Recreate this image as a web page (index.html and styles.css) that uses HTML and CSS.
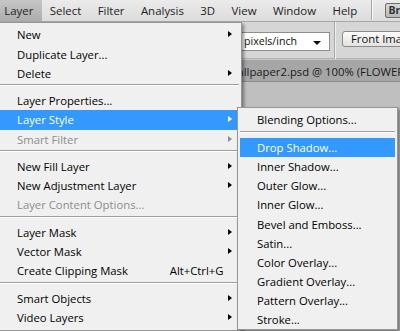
FILE: index.html
```html
<!DOCTYPE html>
<html>
<head>
<meta charset="utf-8">
<link rel="stylesheet" href="styles.css">
</head>
<body>
<div class="app">
  <div class="menubar">
    <span class="mb-item active">Layer</span>
    <span class="mb-item">Select</span>
    <span class="mb-item">Filter</span>
    <span class="mb-item">Analysis</span>
    <span class="mb-item">3D</span>
    <span class="mb-item">View</span>
    <span class="mb-item">Window</span>
    <span class="mb-item">Help</span>
    <span class="mb-sep"></span>
    <span class="br-btn">Br</span>
  </div>
  <div class="optionsbar">
    <div class="select"><span>pixels/inch</span><i class="down"></i></div>
    <span class="ob-sep"></span>
    <span class="btn">Front Image</span>
  </div>
  <div class="tabrow">
    <span class="doctab">Wallpaper2.psd @ 100% (FLOWERS, RGB/8)</span>
  </div>
  <div class="workspace"></div>

  <div class="menu main">
    <div class="row">New<i class="arr"></i></div>
    <div class="row">Duplicate Layer...</div>
    <div class="row">Delete<i class="arr"></i></div>
    <div class="sep"></div>
    <div class="row">Layer Properties...</div>
    <div class="row hl">Layer Style<i class="arr"></i></div>
    <div class="row dis">Smart Filter<i class="arr"></i></div>
    <div class="sep"></div>
    <div class="row">New Fill Layer<i class="arr"></i></div>
    <div class="row">New Adjustment Layer<i class="arr"></i></div>
    <div class="row dis">Layer Content Options...</div>
    <div class="sep"></div>
    <div class="row">Layer Mask<i class="arr"></i></div>
    <div class="row">Vector Mask<i class="arr"></i></div>
    <div class="row">Create Clipping Mask<span class="key">Alt+Ctrl+G</span></div>
    <div class="sep"></div>
    <div class="row">Smart Objects<i class="arr"></i></div>
    <div class="row">Video Layers<i class="arr"></i></div>
  </div>

  <div class="menu sub">
    <div class="row">Blending Options...</div>
    <div class="sep"></div>
    <div class="row hl">Drop Shadow...</div>
    <div class="row">Inner Shadow...</div>
    <div class="row">Outer Glow...</div>
    <div class="row">Inner Glow...</div>
    <div class="row">Bevel and Emboss...</div>
    <div class="row">Satin...</div>
    <div class="row">Color Overlay...</div>
    <div class="row">Gradient Overlay...</div>
    <div class="row">Pattern Overlay...</div>
    <div class="row">Stroke...</div>
  </div>
</div>
</body>
</html>
```

FILE: styles.css
```css
* { box-sizing: border-box; }
html, body { margin: 0; padding: 0; }
body {
  width: 400px;
  height: 331px;
  overflow: hidden;
  font-family: "Open Sans", "Noto Sans", sans-serif;
  font-size: 11.3px;
  color: #111;
  background: #c3c3c3;
}
.app {
  position: relative;
  width: 400px;
  height: 331px;
  overflow: hidden;
  display: flex;
  flex-direction: column;
}
.menubar {
  height: 22px;
  flex: none;
  display: flex;
  align-items: stretch;
  background: linear-gradient(#ebebeb, #dcdcdc);
  border-bottom: 1px solid #a8a8a8;
  margin-left: -4px;
  white-space: nowrap;
}
.mb-item {
  flex: none;
  display: flex;
  align-items: center;
  padding: 0 8.2px;
  font-size: 11.45px;
  color: #222;
}
.mb-item.active {
  background: linear-gradient(#c6c6c6, #adadad);
}
.mb-sep {
  flex: none;
  width: 1px;
  margin: 0 12px 1px 6px;
  background: #a9a9a9;
  border-right: 1px solid #f6f6f6;
  box-sizing: content-box;
}
.br-btn {
  flex: none;
  align-self: center;
  height: 15px;
  padding: 0 2px;
  font-size: 10.5px;
  font-weight: bold;
  line-height: 13px;
  color: #333;
  background: linear-gradient(#d9d9d9, #b7b7b7);
  border: 1px solid #6d6d6d;
  border-radius: 2px;
}
.optionsbar {
  height: 37px;
  flex: none;
  display: flex;
  align-items: center;
  background: #d6d6d6;
  border-bottom: 1px solid #b3b3b3;
  padding-left: 236px;
  white-space: nowrap;
}
.select {
  flex: none;
  width: 94px;
  height: 19px;
  margin-top: 2px;
  background: #fff;
  border: 1px solid #8e8e8e;
  display: flex;
  align-items: center;
  justify-content: space-between;
  padding: 0 8px 0 7px;
  font-size: 10.6px;
}
.down {
  width: 0; height: 0;
  border-left: 4px solid transparent;
  border-right: 4px solid transparent;
  border-top: 4px solid #111;
  margin-top: 3px;
}
.ob-sep {
  flex: none;
  width: 1px;
  height: 37px;
  margin: 0 6px 0 4px;
  background: #a8a8a8;
  border-right: 1px solid #f0f0f0;
  box-sizing: content-box;
}
.btn {
  flex: none;
  height: 16px;
  padding: 0 8px;
  line-height: 14px;
  background: linear-gradient(#fbfbfb, #e3e3e3);
  border: 1px solid #8a8a8a;
  border-radius: 3px;
  margin-top: -2px;
}
.tabrow {
  height: 23px;
  flex: none;
  display: flex;
  align-items: flex-end;
  background: #c8c8c8;
  border-bottom: 1px solid #8a8a8a;
}
.doctab {
  height: 21px;
  display: flex;
  align-items: center;
  padding-left: 227px;
  padding-top: 2px;
  width: 480px;
  flex: none;
  background: #a6a6a6;
  white-space: nowrap;
  color: #1a1a1a;
}
.workspace {
  flex: 1;
  background: #bfbfbf;
}

.menu {
  position: absolute;
  background: #f0f0f0;
  border: 1px solid #979797;
  box-shadow: 2px 2px 3px rgba(0, 0, 0, 0.4);
  padding: 2.45px 2px;
}
.menu.main { left: -3px; top: 22px; width: 245px; }
.menu.sub { left: 237px; top: 107px; width: 161px; padding-bottom: 0; }
.row {
  height: 19.1px;
  display: flex;
  align-items: center;
  padding-left: 17px;
  position: relative;
  white-space: nowrap;
  color: #000;
}
.row.dis { color: #8d8d8d; }
.row.hl { background: #3399ff; color: #fff; }
.sep {
  margin: 1.3px 0 5.3px;
  height: 2px;
  border-top: 1px solid #a0a0a0;
  border-bottom: 1px solid #ffffff;
}
.arr {
  position: absolute;
  right: 7px;
  top: 6px;
  width: 0; height: 0;
  border-top: 3.5px solid transparent;
  border-bottom: 3.5px solid transparent;
  border-left: 4px solid #000;
}
.row.hl .arr { border-left-color: #fff; }
.row.dis .arr { border-left-color: #8d8d8d; }
.key {
  margin-left: auto;
  margin-right: 15.5px;
}
```
